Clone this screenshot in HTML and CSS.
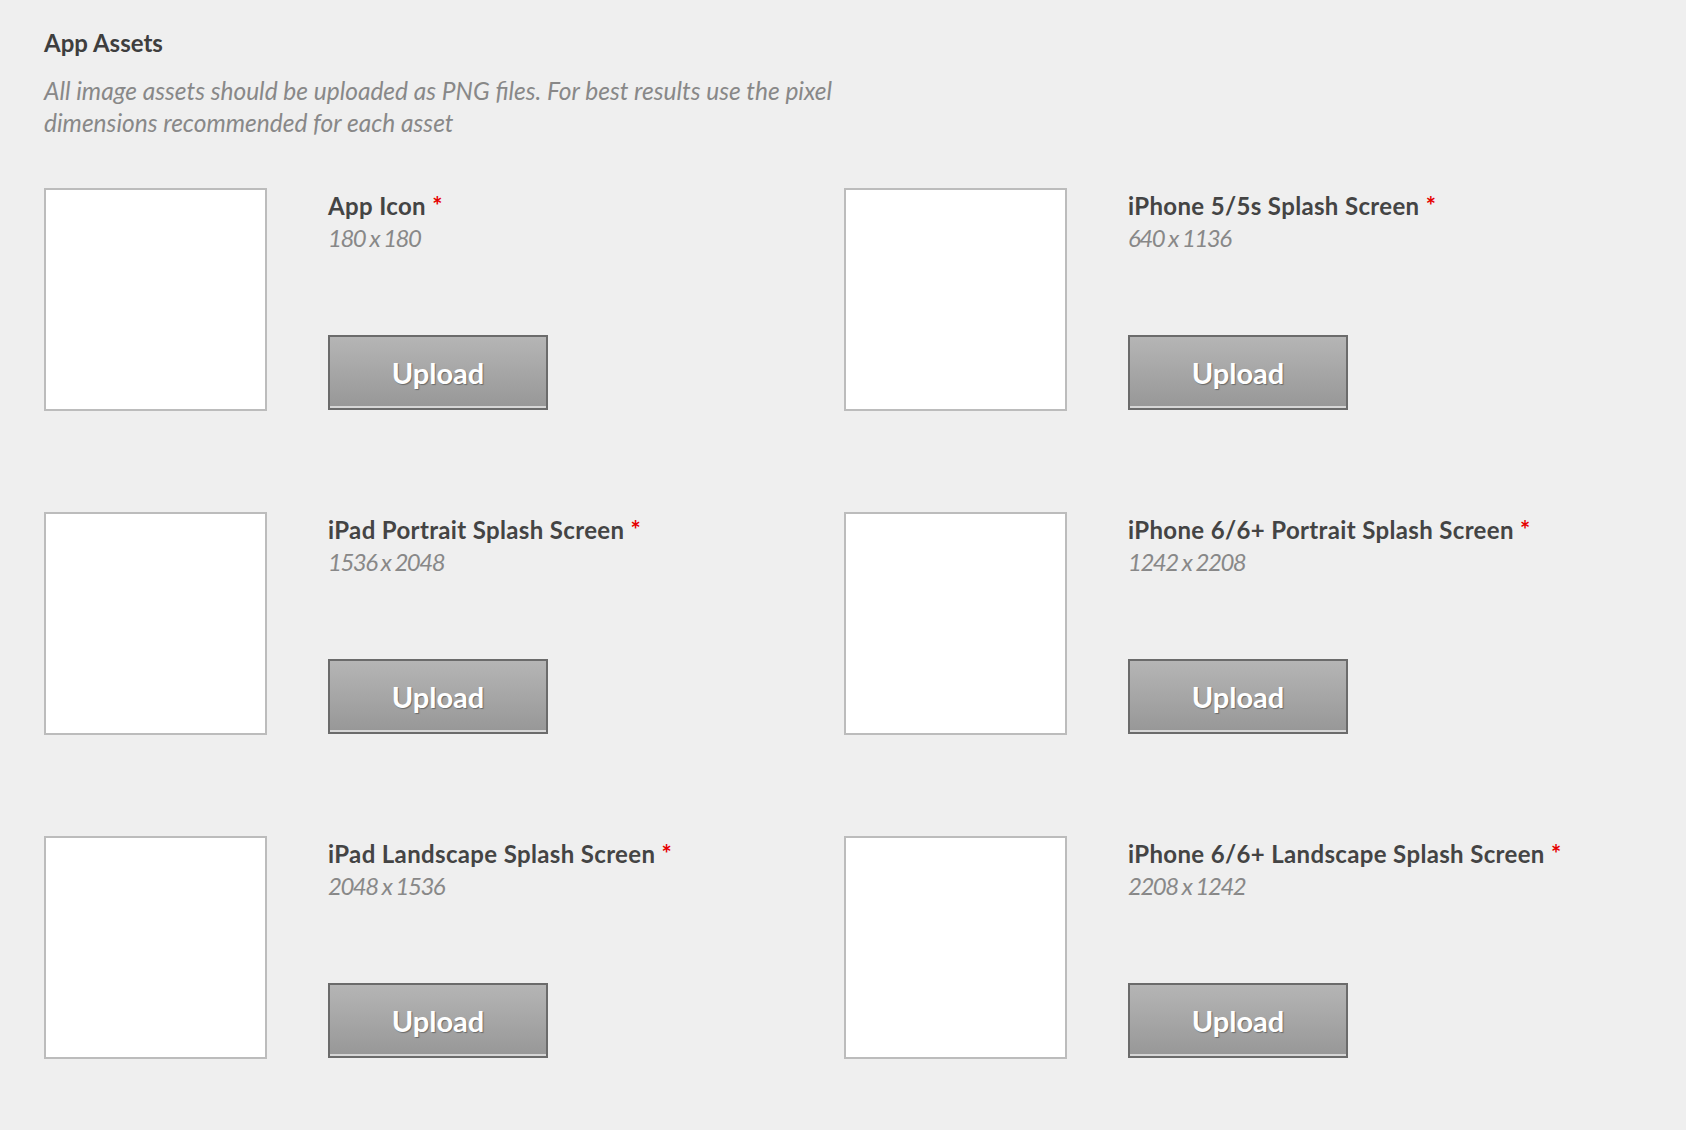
FILE: index.html
```html
<!DOCTYPE html>
<html lang="en">
<head>
<meta charset="utf-8">
<title>App Assets</title>
<link rel="stylesheet" href="styles.css">
</head>
<body>
<main class="page">
  <h2 class="heading">App Assets</h2>
  <p class="desc">All image assets should be uploaded as PNG files. For best results use the pixel dimensions recommended for each asset</p>
  <div class="grid">
    <div class="asset">
      <div class="thumb"></div>
      <div class="info">
        <div class="title">App Icon <span class="req">*</span></div>
        <div class="dims">180 x 180</div>
        <button class="upload" type="button">Upload</button>
      </div>
    </div>
    <div class="asset">
      <div class="thumb"></div>
      <div class="info">
        <div class="title">iPhone 5/5s Splash Screen <span class="req">*</span></div>
        <div class="dims">640 x 1136</div>
        <button class="upload" type="button">Upload</button>
      </div>
    </div>
    <div class="asset">
      <div class="thumb"></div>
      <div class="info">
        <div class="title">iPad Portrait Splash Screen <span class="req">*</span></div>
        <div class="dims">1536 x 2048</div>
        <button class="upload" type="button">Upload</button>
      </div>
    </div>
    <div class="asset">
      <div class="thumb"></div>
      <div class="info">
        <div class="title">iPhone 6/6+ Portrait Splash Screen <span class="req">*</span></div>
        <div class="dims">1242 x 2208</div>
        <button class="upload" type="button">Upload</button>
      </div>
    </div>
    <div class="asset">
      <div class="thumb"></div>
      <div class="info">
        <div class="title">iPad Landscape Splash Screen <span class="req">*</span></div>
        <div class="dims">2048 x 1536</div>
        <button class="upload" type="button">Upload</button>
      </div>
    </div>
    <div class="asset">
      <div class="thumb"></div>
      <div class="info">
        <div class="title">iPhone 6/6+ Landscape Splash Screen <span class="req">*</span></div>
        <div class="dims">2208 x 1242</div>
        <button class="upload" type="button">Upload</button>
      </div>
    </div>
  </div>
</main>
</body>
</html>
```

FILE: styles.css
```css
html, body {
  margin: 0;
  padding: 0;
  background: #efefef;
}

body {
  font-family: Lato, "Open Sans", "Noto Sans", sans-serif;
  color: #444;
}

.page {
  padding: 28px 0 0 44px;
}

.heading {
  margin: 0;
  font-size: 24px;
  line-height: 30px;
  font-weight: 700;
  color: #3e3e3e;
}

.desc {
  margin: 17px 0 0 0;
  width: 820px;
  font-size: 24.5px;
  line-height: 32px;
  font-style: italic;
  color: #888;
}

.grid {
  margin-top: 49px;
  display: grid;
  grid-template-columns: 800px 800px;
  row-gap: 101px;
}

.asset {
  display: flex;
  gap: 61px;
}

.thumb {
  width: 223px;
  height: 223px;
  box-sizing: border-box;
  border: 2px solid #bcbcbc;
  background: #fff;
  flex: none;
}

.info {
  height: 222px;
  display: flex;
  flex-direction: column;
  align-items: flex-start;
  padding-top: 2px;
  box-sizing: border-box;
}

.title {
  font-size: 24px;
  line-height: 31px;
  font-weight: 700;
  letter-spacing: 0.35px;
  color: #444;
  white-space: nowrap;
}

.req {
  color: #e60000;
}

.dims {
  margin-top: 1px;
  font-size: 24px;
  line-height: 31px;
  font-style: italic;
  letter-spacing: -1.5px;
  color: #888;
}

.upload {
  margin-top: auto;
  margin-bottom: 0;
  width: 220px;
  height: 75px;
  box-sizing: border-box;
  border: 2px solid #6b6b6b;
  background: linear-gradient(#b5b5b5, #979797);
  box-shadow: inset 0 -2px 0 #d6d6d6;
  font-family: Lato, "Open Sans", sans-serif;
  font-size: 29px;
  font-weight: 700;
  color: #fff;
  text-shadow: 1px 1px 1px #6a6a6a;
  padding: 0;
  cursor: pointer;
}
```
